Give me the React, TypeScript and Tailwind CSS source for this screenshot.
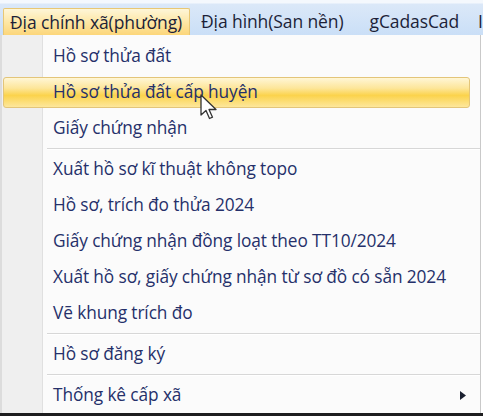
import React from "react";

const font = { fontFamily: '"Open Sans", "Noto Sans", sans-serif' };

function Item({ label, highlight, arrow }: { label: string; highlight?: boolean; arrow?: boolean }) {
  return (
    <div className="relative h-9 flex items-center">
      {highlight && (
        <div className="absolute left-[3px] right-[10px] top-[3px] bottom-[2px] rounded-[3px] border border-[#e3c579] bg-[linear-gradient(to_bottom,#fff6d6_0%,#fde69a_35%,#fbd34c_60%,#fde79c_100%)]" />
      )}
      <span className="relative pl-[53px] text-[17.3px] font-medium tracking-[-0.1px] text-[#25306a] whitespace-nowrap">{label}</span>
      {arrow && (
        <svg className="absolute left-[460px] top-[14px]" width="6" height="9" viewBox="0 0 6 9">
          <path d="M0 0 L6 4.5 L0 9 Z" fill="#1b2030" />
        </svg>
      )}
    </div>
  );
}

function Sep() {
  return (
    <div className="h-[5px] flex flex-col justify-center pl-[47px]">
      <div className="h-px bg-[#d7d7d7]" />
      <div className="h-px bg-white" />
    </div>
  );
}

export default function App() {
  return (
    <div className="w-[483px] h-[416px] bg-white overflow-hidden relative" style={font}>
      {/* menu bar */}
      <div className="h-[35px] bg-[linear-gradient(to_bottom,#f4f8fd_0%,#f4f8fd_8%,#dbe8f8_12%,#cadff7_100%)] flex items-end pl-[3px]">
        <div className="h-[27px] w-[190px] border border-b-0 border-[#e8c774] rounded-t-[2px] bg-[linear-gradient(to_bottom,#fef6d8_0%,#fde7a6_50%,#fcd67a_100%)] flex items-center pl-[6px] text-[17.5px] font-medium tracking-[-0.1px] text-[#1c1f38] whitespace-nowrap">
          Địa chính xã(phường)
        </div>
        <div className="h-[27px] flex items-center pl-[11px] text-[17.5px] font-medium tracking-[-0.1px] text-[#1c1f38] whitespace-nowrap">Địa hình(San nền)</div>
        <div className="h-[27px] flex items-center pl-[26px] text-[17.5px] font-medium tracking-[-0.1px] text-[#1c1f38] whitespace-nowrap">gCadasCad</div>
        <div className="h-[27px] flex items-center pl-[19px] text-[17.5px] font-medium text-[#1c1f38] whitespace-nowrap">I</div>
      </div>
      {/* dropdown */}
      <div className="relative w-[481px] h-[378px] border-r border-[#c9c9c9] bg-[#fbfbfb] flex">
        <div className="w-[43px] bg-[#efefef] border-l-2 border-[#dcdcdc] border-r border-r-[#e0e0e0] shrink-0" />
        <div className="absolute inset-0 pt-[3px]">
          <Item label="Hồ sơ thửa đất" />
          <Item label="Hồ sơ thửa đất cấp huyện" highlight />
          <Item label="Giấy chứng nhận" />
          <Sep />
          <Item label="Xuất hồ sơ kĩ thuật không topo" />
          <Item label="Hồ sơ, trích đo thửa 2024" />
          <Item label="Giấy chứng nhận đồng loạt theo TT10/2024" />
          <Item label="Xuất hồ sơ, giấy chứng nhận từ sơ đồ có sẵn 2024" />
          <Item label="Vẽ khung trích đo" />
          <Sep />
          <Item label="Hồ sơ đăng ký" />
          <Sep />
          <Item label="Thống kê cấp xã" arrow />
        </div>
      </div>
      <div className="h-[3px] bg-[#1d1d1f]" />
      {/* cursor */}
      <svg className="absolute left-[200px] top-[94px]" width="20" height="27" viewBox="0 0 20 27">
        <path d="M1 1 L1 21 L6 16.5 L9.5 24.5 L12.5 23.2 L9 15.5 L16 15.5 Z" fill="#ffffff" stroke="#333333" strokeWidth="1.3" strokeLinejoin="round" />
      </svg>
    </div>
  );
}
